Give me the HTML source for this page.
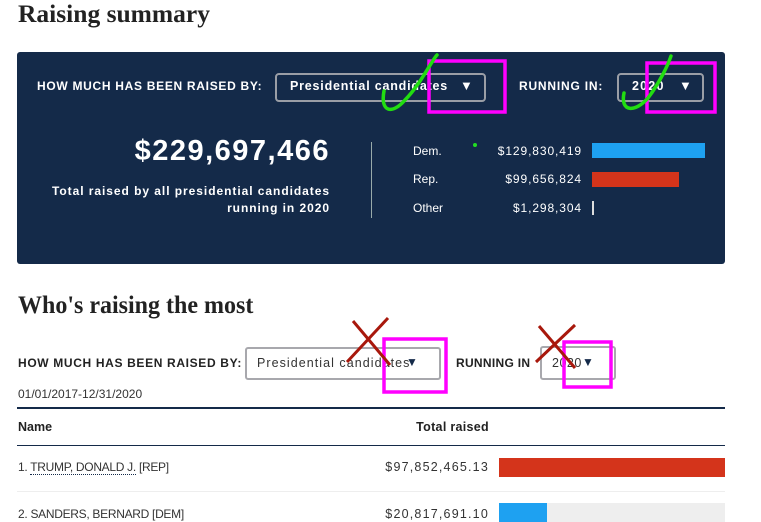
<!DOCTYPE html>
<html><head><meta charset="utf-8"><style>
*{margin:0;padding:0;box-sizing:border-box}
body{width:761px;height:517px;overflow:hidden;background:#fff;font-family:"Liberation Sans",sans-serif;position:relative;color:#222}
.a{position:absolute;white-space:nowrap}
.serif{font-family:"Liberation Serif",serif;font-weight:bold;color:#222}
.panel{position:absolute;left:17px;top:52px;width:708px;height:212px;background:#142a49;border-radius:3px}
.w{color:#fff}
.dd{position:absolute;border:2px solid #9a9ea6;border-radius:4px}
.dd2{position:absolute;border:2px solid #a8a8ad;border-radius:3px}
</style></head><body>
<div class="a serif" style="left:18px;top:-1px;font-size:25.5px">Raising summary</div>
<div class="panel"></div>
<div class="a w" style="left:37px;top:79px;font-size:12px;font-weight:bold;letter-spacing:.7px">HOW MUCH HAS BEEN RAISED BY:</div>
<div class="dd" style="left:275px;top:73px;width:211px;height:29px"></div>
<div class="a w" style="left:290px;top:79px;font-size:12.5px;font-weight:bold;letter-spacing:.8px">Presidential candidates</div>
<div class="a w" style="left:460px;top:78px;font-size:13px">▼</div>
<div class="a w" style="left:519px;top:79px;font-size:12px;font-weight:bold;letter-spacing:.8px">RUNNING IN:</div>
<div class="dd" style="left:617px;top:73px;width:87px;height:29px"></div>
<div class="a w" style="left:632px;top:79px;font-size:12.5px;font-weight:bold;letter-spacing:1.2px">2020</div>
<div class="a w" style="left:679px;top:78px;font-size:13px">▼</div>
<div class="a w" style="right:431px;top:135px;font-size:29px;font-weight:bold;letter-spacing:1.5px">$229,697,466</div>
<div class="a w" style="right:431px;top:183px;font-size:12px;font-weight:bold;text-align:right;line-height:17px;letter-spacing:.95px">Total raised by all presidential candidates<br>running in 2020</div>
<div class="a" style="left:371px;top:142px;width:1px;height:76px;background:#9aa"></div>
<div class="a w" style="left:413px;top:144px;font-size:12px">Dem.</div>
<div class="a w" style="left:413px;top:172px;font-size:12px">Rep.</div>
<div class="a w" style="left:413px;top:201px;font-size:12px">Other</div>
<div class="a w" style="right:179px;top:144px;font-size:12px;letter-spacing:.9px">$129,830,419</div>
<div class="a w" style="right:179px;top:172px;font-size:12px;letter-spacing:.9px">$99,656,824</div>
<div class="a w" style="right:179px;top:201px;font-size:12px;letter-spacing:.9px">$1,298,304</div>
<div class="a" style="left:592px;top:143px;width:113px;height:15px;background:#1ea1f1"></div>
<div class="a" style="left:592px;top:172px;width:87px;height:15px;background:#d4341b"></div>
<div class="a" style="left:592px;top:201px;width:2px;height:14px;background:#ddd"></div>
<div class="a" style="left:473px;top:143px;width:4px;height:4px;border-radius:50%;background:#2d2"></div>

<div class="a serif" style="left:18px;top:292px;font-size:25px;transform:scaleX(.96);transform-origin:left">Who's raising the most</div>
<div class="a" style="left:18px;top:356px;font-size:12px;font-weight:bold;letter-spacing:.65px">HOW MUCH HAS BEEN RAISED BY:</div>
<div class="dd2" style="left:245px;top:347px;width:196px;height:33px"></div>
<div class="a" style="left:257px;top:356px;font-size:12.5px;color:#333;letter-spacing:1.05px">Presidential candidates</div>
<div class="a" style="left:406px;top:355px;font-size:12px;color:#142a49">▼</div>
<div class="a" style="left:456px;top:356px;font-size:12px;font-weight:bold;letter-spacing:.3px">RUNNING IN</div>
<div class="dd2" style="left:540px;top:346px;width:76px;height:34px"></div>
<div class="a" style="left:552px;top:356px;font-size:12.5px;color:#333;letter-spacing:.5px">2020</div>
<div class="a" style="left:582px;top:355px;font-size:12px;color:#142a49">▼</div>
<div class="a" style="left:18px;top:387px;font-size:12px;color:#333">01/01/2017-12/31/2020</div>
<div class="a" style="left:17px;top:407px;width:708px;height:2px;background:#142a49"></div>
<div class="a" style="left:18px;top:420px;font-size:12.5px;font-weight:bold">Name</div>
<div class="a" style="right:272px;top:420px;font-size:12.5px;font-weight:bold;letter-spacing:.3px">Total raised</div>
<div class="a" style="left:17px;top:445px;width:708px;height:1px;background:#142a49"></div>
<div class="a" style="left:18px;top:460px;font-size:12px;color:#333;letter-spacing:-.3px">1. <span style="border-bottom:1px dotted #142a49">TRUMP, DONALD J.</span> [REP]</div>
<div class="a" style="right:272px;top:460px;font-size:12.5px;color:#333;letter-spacing:1.2px">$97,852,465.13</div>
<div class="a" style="left:499px;top:458px;width:226px;height:19px;background:#d4341b"></div>
<div class="a" style="left:17px;top:491px;width:708px;height:1px;background:#eee"></div>
<div class="a" style="left:18px;top:507px;font-size:12px;color:#333;letter-spacing:-.3px">2. SANDERS, BERNARD [DEM]</div>
<div class="a" style="right:272px;top:507px;font-size:12.5px;color:#333;letter-spacing:1.2px">$20,817,691.10</div>
<div class="a" style="left:499px;top:503px;width:226px;height:19px;background:#eee"></div>
<div class="a" style="left:499px;top:503px;width:48px;height:19px;background:#1ea1f1"></div>

<svg class="a" style="left:0;top:0" width="761" height="517">
<g fill="none" stroke="#f0f" stroke-width="3.5">
<rect x="429" y="61" width="76" height="51"/>
<rect x="647" y="63" width="68" height="49"/>
<rect x="384" y="339" width="62" height="53"/>
<rect x="564" y="342" width="47" height="45"/>
</g>
<g fill="none" stroke="#22dd11" stroke-width="3.5" stroke-linecap="round">
<path d="M384 91 C380 112,392 115,405 100 C420 85,432 60,437 55"/>
<path d="M624 93 C620 112,635 113,648 98 C660 82,668 65,671 56"/>
</g>
<g stroke="#a8180c" stroke-width="3">
<path d="M353 321 L390 365 M388 318 L347 362"/>
<path d="M539 326 L575 368 M575 325 L536 362"/>
</g>
</svg>
</body></html>
